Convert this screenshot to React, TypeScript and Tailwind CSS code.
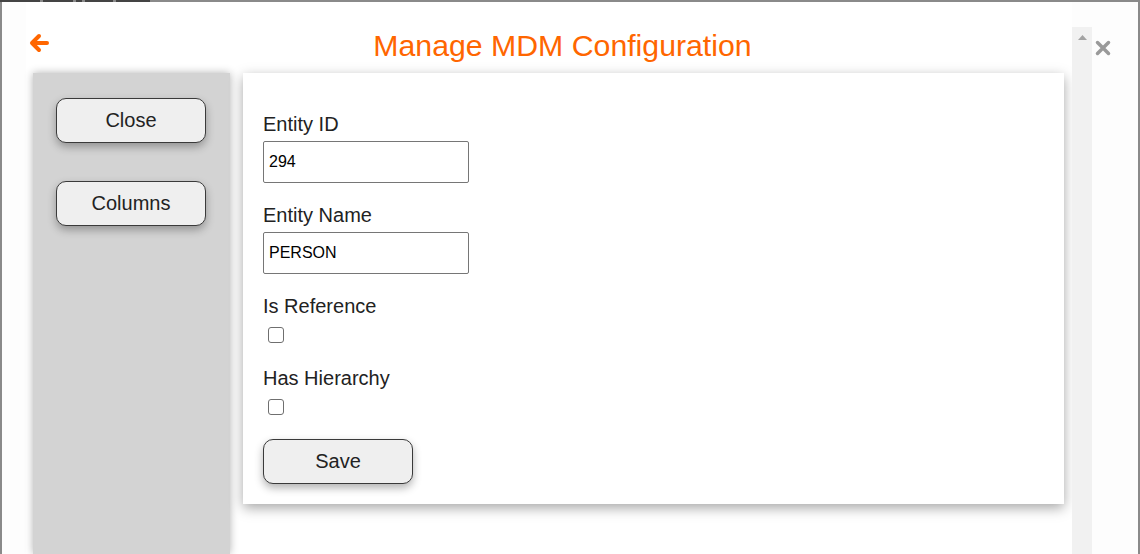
import React from "react";

const font = { fontFamily: '"Liberation Sans", Arial, sans-serif' };

function SideButton({ label }: { label: string }) {
  return (
    <button className="w-[150px] h-[45px] rounded-[10px] bg-[#efefef] border border-[#3a3a3a] text-[20px] text-[#222] pb-[2px] shadow-[0_4px_8px_rgba(0,0,0,0.3)]">
      {label}
    </button>
  );
}

function Field({ label, value }: { label: string; value: string }) {
  return (
    <div className="flex flex-col">
      <div className="text-[20px] leading-[23px] text-[#222] pt-[1px] h-[23px]">{label}</div>
      <div className="mt-[6px] w-[206px] h-[42px] border border-[#767676] rounded-[2px] flex items-center pl-[5px] text-[16px] text-black">
        {value}
      </div>
    </div>
  );
}

function Check({ label }: { label: string }) {
  return (
    <div className="flex flex-col">
      <div className="text-[20px] leading-[23px] text-[#222] pt-[1px] h-[23px]">{label}</div>
      <div className="mt-[10px] ml-[5px] w-[16px] h-[16px] border border-[#6f6f6f] rounded-[3px] bg-white" />
    </div>
  );
}

export default function App() {
  return (
    <div style={font} className="relative w-[1140px] h-[554px] bg-[#fdfdfd] border-2 border-b-0 border-[#8a8a8a]">
      <div className="absolute top-[-2px] left-[-2px] z-10 flex gap-[3px]">
        <div className="w-[40px] h-[2px] bg-[#444]" />
        <div className="w-[30px] h-[2px] bg-[#444]" />
        <div className="w-[6px] h-[2px] bg-[#444]" />
        <div className="w-[28px] h-[2px] bg-[#444]" />
        <div className="w-[34px] h-[2px] bg-[#444]" />
      </div>
      <div className="flex h-full">
        <div className="w-[24px] shrink-0" />
        <div className="w-[1046px] shrink-0 pt-[25px] bg-white">
          <div className="h-[46px] flex items-start">
            <div className="w-[28px] pl-[2px] pt-[5px]">
              <svg width="22" height="22" viewBox="0 0 22 22">
                <path d="M19 11H5M11 4L4 11l7 7" fill="none" stroke="#ff6600" strokeWidth="4" strokeLinecap="round" strokeLinejoin="round" />
              </svg>
            </div>
            <div className="flex-1 text-center text-[30.25px] leading-[34px] pt-[2px] text-[#ff6600] pr-[1px]">
              Manage MDM Configuration
            </div>
          </div>
          <div className="flex pl-[7px] gap-[13px]">
            <div className="w-[197px] h-[481px] bg-[#d3d3d3] shadow-[0_0_8px_rgba(0,0,0,0.3)] flex flex-col items-center pt-[25px] gap-[38px] pr-[1px]">
              <SideButton label="Close" />
              <SideButton label="Columns" />
            </div>
            <div className="w-[821px] h-[431px] bg-white shadow-[0_4px_12px_rgba(0,0,0,0.35)] pt-[39px] pl-[20px] flex flex-col">
              <Field label="Entity ID" value="294" />
              <div className="h-[20px]" />
              <Field label="Entity Name" value="PERSON" />
              <div className="h-[20px]" />
              <Check label="Is Reference" />
              <div className="h-[23px]" />
              <Check label="Has Hierarchy" />
              <div className="h-[24px]" />
              <button className="w-[150px] h-[45px] rounded-[10px] bg-[#efefef] border border-[#3a3a3a] text-[20px] text-[#222] pb-[2px] shadow-[0_4px_8px_rgba(0,0,0,0.3)]">
                Save
              </button>
            </div>
          </div>
        </div>
        <div className="w-[20px] shrink-0 mt-[25px] bg-[#f1f1f1] flex justify-center pt-[8px]">
          <svg width="9" height="5" viewBox="0 0 9 5">
            <path d="M0 5L4.5 0L9 5Z" fill="#a3a3a3" />
          </svg>
        </div>
        <div className="flex-1 pt-[38px] pl-[3px]">
          <svg width="16" height="16" viewBox="0 0 16 16">
            <path d="M2.5 2.5L13.5 13.5M13.5 2.5L2.5 13.5" stroke="#9a9a9a" strokeWidth="3.5" strokeLinecap="round" />
          </svg>
        </div>
      </div>
    </div>
  );
}
